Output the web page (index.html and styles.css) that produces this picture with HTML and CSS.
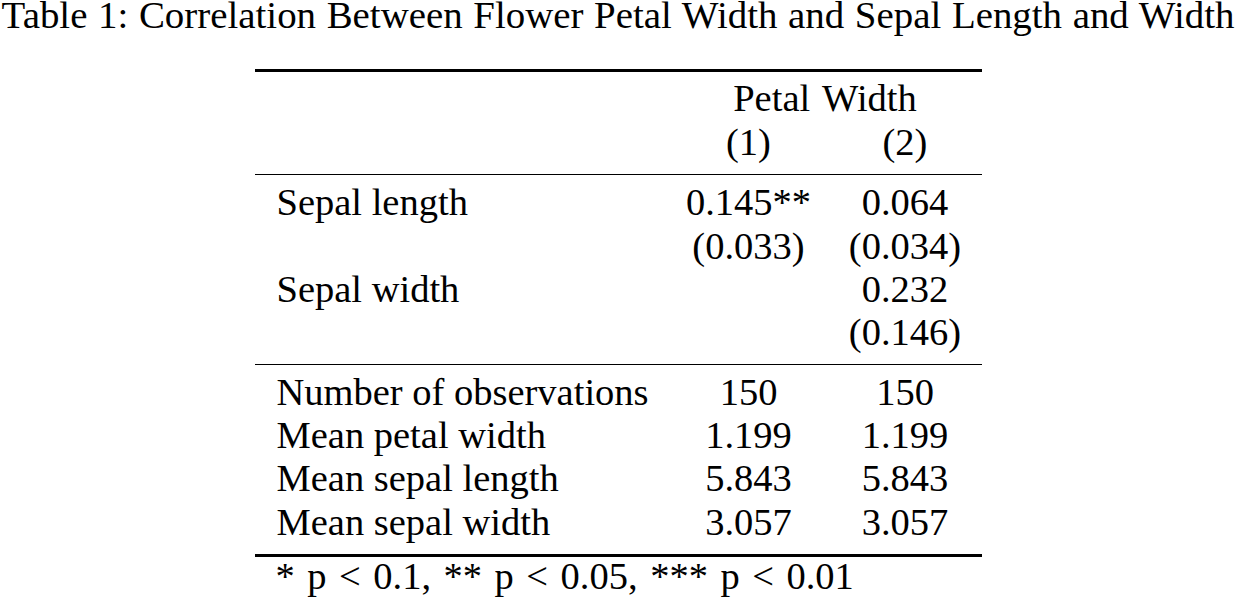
FILE: index.html
```html
<!DOCTYPE html>
<html lang="en">
<head>
<meta charset="utf-8">
<title>Table 1</title>
<link rel="stylesheet" href="styles.css">
</head>
<body>
<div class="page">
  <p class="caption">Table 1: Correlation Between Flower Petal Width and Sepal Length and Width</p>
  <div class="table">
    <div class="section head">
      <span class="label"></span><span class="span2">Petal Width</span>
      <span class="label"></span><span class="num">(1)</span><span class="num">(2)</span>
    </div>
    <div class="section body">
      <span class="label">Sepal length</span><span class="num">0.145**</span><span class="num">0.064</span>
      <span class="label"></span><span class="num">(0.033)</span><span class="num">(0.034)</span>
      <span class="label">Sepal width</span><span class="num"></span><span class="num">0.232</span>
      <span class="label"></span><span class="num"></span><span class="num">(0.146)</span>
    </div>
    <div class="section stats">
      <span class="label">Number of observations</span><span class="num">150</span><span class="num">150</span>
      <span class="label">Mean petal width</span><span class="num">1.199</span><span class="num">1.199</span>
      <span class="label">Mean sepal length</span><span class="num">5.843</span><span class="num">5.843</span>
      <span class="label">Mean sepal width</span><span class="num">3.057</span><span class="num">3.057</span>
    </div>
    <p class="note">* p &lt; 0.1, ** p &lt; 0.05, *** p &lt; 0.01</p>
  </div>
</div>
</body>
</html>
```
FILE: styles.css
```css
html, body {
  margin: 0;
  padding: 0;
  background: #fff;
}

body {
  font-family: "Liberation Serif", "Times New Roman", serif;
  color: #000;
  width: 1236px;
  height: 600px;
  overflow: hidden;
}

.page {
  width: 1236px;
}

.caption {
  margin: 0;
  font-size: 38.9px;
  line-height: 30px;
  height: 30px;
  text-align: center;
  white-space: nowrap;
  word-spacing: 0.9px;
}

.table {
  width: 727px;
  margin: 39px auto 0;
  border-top: 3px solid #000;
  font-size: 38.5px;
}

.section {
  display: grid;
  grid-template-columns: 414px 160px 153px;
  grid-auto-rows: 43.2px;
  line-height: 43.2px;
  white-space: nowrap;
}

.head {
  padding: 5.4px 0 10.7px;
  border-bottom: 1.6px solid #000;
}

.body {
  padding: 6px 0 10px;
  border-bottom: 1.6px solid #000;
}

.stats {
  padding: 5.9px 0 10.3px;
  border-bottom: 3px solid #000;
}

.label {
  padding-left: 22px;
}

.num {
  text-align: center;
}

.span2 {
  grid-column: 2 / 4;
  text-align: center;
  word-spacing: 3px;
}

.note {
  margin: 3.5px 0 0;
  padding-left: 21px;
  line-height: 30px;
  white-space: nowrap;
  word-spacing: 2.9px;
}
```
